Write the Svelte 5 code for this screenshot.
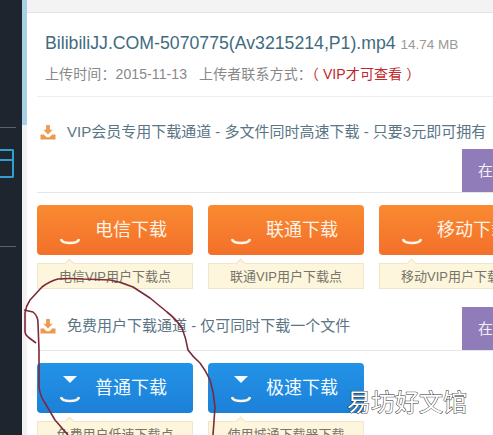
<script lang="ts">
	interface Channel {
		label: string;
		note: string;
		arrow?: boolean;
	}

	const vipChannels: Channel[] = [
		{ label: '电信下载', note: '电信VIP用户下载点' },
		{ label: '联通下载', note: '联通VIP用户下载点' },
		{ label: '移动下载', note: '移动VIP用户下载点' }
	];

	const freeChannels: Channel[] = [
		{ label: '普通下载', note: '免费用户低速下载点', arrow: true },
		{ label: '极速下载', note: '使用城通下载器下载', arrow: true }
	];

	const sections = [
		{ title: 'VIP会员专用下载通道 - 多文件同时高速下载 - 只要3元即可拥有', kind: 'vip', channels: vipChannels },
		{ title: '免费用户下载通道 - 仅可同时下载一个文件', kind: 'free', channels: freeChannels }
	];
</script>

<div class="page">
	<aside class="sidebar">
		<div class="side-line first"></div>
		<div class="side-icon">
			<span></span>
		</div>
		<div class="side-line second"></div>
	</aside>
	<div class="strip"></div>

	<main class="main">
		<div class="topbar"></div>

		<header class="file">
			<h1>BilibiliJJ.COM-5070775(Av3215214,P1).mp4 <small>14.74 MB</small></h1>
			<p>上传时间：2015-11-13 &nbsp; 上传者联系方式：<em>（ VIP才可查看 ）</em></p>
		</header>

		{#each sections as section}
			<section class="channel {section.kind}">
				<div class="channel-head">
					<h2>
						<svg viewBox="0 0 16 16" width="16" height="15" aria-hidden="true">
							<path d="M6 0h4v5h3l-5 5-5-5h3z" fill="#ee9a4e" />
							<path d="M0 10h3.500l3 3h3l3-3H16v5.500H0z" fill="#ee9a4e" />
						</svg>
						<span>{section.title}</span>
					</h2>
					<div class="online">在线</div>
				</div>
				<div class="buttons">
					{#each section.channels as channel}
						<div class="item">
							<button>
								<span class="glyph">
									{#if channel.arrow}
										<svg viewBox="0 0 14 7" width="14" height="7" aria-hidden="true">
											<path d="M0 0h14l-7 7z" fill="#f4fbff" />
										</svg>
									{/if}
									<svg class="smile" viewBox="0 0 20 7" width="20" height="7" aria-hidden="true">
										<path d="M1 1c.5 3 3 4 9 4s8.500-1 9-4" fill="none" stroke="#fdf3e6" stroke-width="2.600" />
									</svg>
								</span>
								<span class="label">{channel.label}</span>
							</button>
							<div class="note">{channel.note}</div>
						</div>
					{/each}
				</div>
			</section>
		{/each}
	</main>

	<svg class="scribble" viewBox="0 0 493 435" width="493" height="435" aria-hidden="true">
		<path
			d="M24 310L33 312Q38 316 38 323L39 350L39 387Q40 396 45 403L55 420L68 435"
			fill="none"
			stroke="#7a2a38"
			stroke-width="1.600"
			stroke-linejoin="round"
		/>
		<path
			d="M36 343L28 337Q25 334 25 332L25 313Q26 306 30 300L42 287Q50 281 58 279Q70 278 83 279L110 280Q122 282 133 287L150 298L167 312Q176 319 182 328Q186 338 188 350Q193 357 200 363Q206 371 210 380Q214 393 215 407L213 435"
			fill="none"
			stroke="#7a2a38"
			stroke-width="1.600"
			stroke-linejoin="round"
		/>
	</svg>

	<div class="watermark">易坊好文馆</div>
</div>

<style>
	:global(body) {
		margin: 0;
		background: #fff;
	}

	.page {
		position: relative;
		display: flex;
		width: 493px;
		height: 435px;
		overflow: hidden;
		font-family: 'Liberation Sans', 'Noto Sans CJK SC', sans-serif;
	}

	.sidebar {
		flex: 0 0 22px;
		background: #1f252e;
		padding-top: 127px;
		box-sizing: border-box;
	}

	.side-line {
		height: 1px;
		background: #5d626a;
		width: 16px;
	}

	.side-icon {
		width: 14px;
		height: 29px;
		margin-top: 21px;
		box-sizing: border-box;
		border: 2px solid #2f9fd0;
		border-left: 0;
		border-radius: 0 2px 2px 0;
		padding-top: 8px;
	}

	.side-icon span {
		display: block;
		height: 2px;
		background: #2f9fd0;
	}

	.side-line.second {
		margin-top: 68px;
	}

	.strip {
		flex: 0 0 5px;
		background: linear-gradient(180deg, #a9cfe4 0 125px, #f1f1f1 125px);
	}

	.main {
		flex: 0 0 466px;
		padding-left: 10px;
		box-sizing: border-box;
		background: #fff;
	}

	.topbar {
		height: 12px;
		margin-left: -10px;
		background: #f3f3f3;
		border-bottom: 1px solid #e3e3e3;
	}

	.file {
		height: 84px;
		padding: 20px 0 0 8px;
		box-sizing: border-box;
		border-bottom: 1px solid #eeeeee;
		width: 470px;
	}

	h1 {
		margin: 0;
		font-size: 17.700px;
		line-height: 20px;
		font-weight: 400;
		color: #3f6b80;
		white-space: nowrap;
	}

	small {
		font-size: 13.500px;
		color: #999;
	}

	.file p {
		margin: 10px 0 0;
		font-size: 14px;
		line-height: 18px;
		letter-spacing: 0.1px;
		color: #888;
		white-space: nowrap;
	}

	em {
		font-style: normal;
		color: #c0282c;
	}

	.channel-head {
		position: relative;
		border-bottom: 1px solid #e6e6e6;
		box-sizing: border-box;
		width: 470px;
	}

	.vip .channel-head {
		height: 96px;
	}

	.free .channel-head {
		height: 62px;
	}

	h2 {
		display: flex;
		align-items: center;
		gap: 11px;
		margin: 0;
		padding: 25px 0 0 3px;
		font-size: 15px;
		line-height: 20px;
		font-weight: 400;
		color: #5b7585;
		white-space: nowrap;
	}

	.free h2 {
		padding-top: 27px;
	}

	.online {
		position: absolute;
		right: 0;
		bottom: 0;
		width: 45px;
		height: 43px;
		padding-left: 16px;
		box-sizing: border-box;
		background: #8f7cb8;
		color: #f3f0f8;
		font-size: 15px;
		line-height: 43px;
		white-space: nowrap;
		overflow: hidden;
	}

	.buttons {
		display: flex;
		gap: 15px;
		margin-top: 12px;
	}

	.item {
		flex: 0 0 156px;
	}

	button {
		display: flex;
		align-items: center;
		width: 156px;
		height: 50px;
		padding: 0 0 0 23px;
		border: 0;
		border-radius: 4px;
		font-family: inherit;
		color: #fdf3e6;
		background: linear-gradient(180deg, #f98a30 0%, #f3702a 100%);
	}

	.free button {
		color: #f4fbff;
		background: linear-gradient(180deg, #2293e6 0%, #1d80d8 100%);
	}

	.glyph {
		display: flex;
		flex-direction: column;
		align-items: center;
		justify-content: space-between;
		width: 20px;
		height: 27px;
		margin-right: 15px;
		margin-top: 3px;
	}

	.smile {
		margin-top: auto;
	}

	.label {
		font-size: 18px;
		line-height: 24px;
		white-space: nowrap;
	}

	.note {
		position: relative;
		height: 26px;
		margin-top: 8px;
		box-sizing: border-box;
		border: 1px solid #f0e6c8;
		background: #fdf6dc;
		color: #77746a;
		font-size: 13px;
		line-height: 25px;
		text-align: center;
		white-space: nowrap;
	}

	.note::before {
		content: '';
		position: absolute;
		top: -4px;
		left: 28px;
		width: 6px;
		height: 6px;
		background: #fdf6dc;
		border: 1px solid #f0e6c8;
		border-width: 1px 0 0 1px;
		transform: rotate(45deg);
	}

	.scribble {
		position: absolute;
		top: 0;
		left: 0;
		pointer-events: none;
	}

	.watermark {
		position: absolute;
		left: 347px;
		top: 389px;
		font-size: 24px;
		line-height: 28px;
		color: #fff;
		-webkit-text-stroke: 1px #333;
		paint-order: stroke fill;
		white-space: nowrap;
	}
</style>
